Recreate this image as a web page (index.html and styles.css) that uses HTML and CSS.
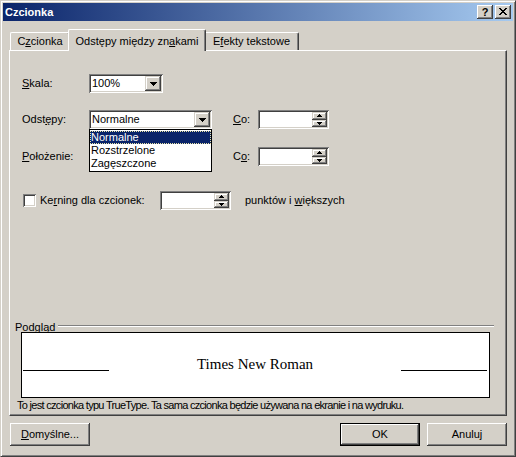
FILE: index.html
```html
<!DOCTYPE html>
<html lang="pl">
<head>
<meta charset="utf-8">
<title>Czcionka</title>
<link rel="stylesheet" href="styles.css">
</head>
<body>
<div class="window">
  <div class="titlebar">
    <span class="title">Czcionka</span>
    <div class="caption-btns">
      <span class="cbtn help">?</span>
      <span class="cbtn">
        <svg width="8" height="7" viewBox="0 0 8 7" shape-rendering="crispEdges"><path d="M0 0h2v1h-2z M6 0h2v1h-2z M1 1h2v1h-2z M5 1h2v1h-2z M2 2h4v1h-4z M3 3h2v1h-2z M2 4h4v1h-4z M1 5h2v1h-2z M5 5h2v1h-2z M0 6h2v1h-2z M6 6h2v1h-2z" fill="#000"/></svg>
      </span>
    </div>
  </div>

  <div class="tabs">
    <div class="tab tab1">C<u>z</u>cionka</div>
    <div class="tab active">Odstępy między zn<u>a</u>kami</div>
    <div class="tab tab3">E<u>f</u>ekty tekstowe</div>
  </div>

  <div class="panel">
    <div class="row row1">
      <span class="lbl"><u>S</u>kala:</span>
      <div class="combo combo-sm">
        <span class="ctext">100%</span>
        <span class="dbtn"><svg width="7" height="4" viewBox="0 0 7 4" shape-rendering="crispEdges"><path d="M0 0h7v1h-7z M1 1h5v1h-5z M2 2h3v1h-3z M3 3h1v1h-1z" fill="#000"/></svg></span>
      </div>
    </div>

    <div class="row row2">
      <span class="lbl">Odst<u>ę</u>py:</span>
      <div class="combo combo-lg">
        <span class="ctext">Normalne</span>
        <span class="dbtn"><svg width="7" height="4" viewBox="0 0 7 4" shape-rendering="crispEdges"><path d="M0 0h7v1h-7z M1 1h5v1h-5z M2 2h3v1h-3z M3 3h1v1h-1z" fill="#000"/></svg></span>
        <div class="dropdown">
          <div class="item selected">Normalne</div>
          <div class="item">Rozstrzelone</div>
          <div class="item">Zagęszczone</div>
        </div>
      </div>
      <span class="co"><u>C</u>o:</span>
      <div class="spin">
        <span class="stext"></span>
        <span class="sbtns">
          <span class="sbtn"><svg width="5" height="3" viewBox="0 0 5 3" shape-rendering="crispEdges"><path d="M2 0h1v1h-1z M1 1h3v1h-3z M0 2h5v1h-5z" fill="#000"/></svg></span>
          <span class="sbtn"><svg width="5" height="3" viewBox="0 0 5 3" shape-rendering="crispEdges"><path d="M0 0h5v1h-5z M1 1h3v1h-3z M2 2h1v1h-1z" fill="#000"/></svg></span>
        </span>
      </div>
    </div>

    <div class="row row3">
      <span class="lbl"><u>P</u>ołożenie:</span>
      <div class="combo combo-lg">
        <span class="ctext"></span>
        <span class="dbtn"></span>
      </div>
      <span class="co">C<u>o</u>:</span>
      <div class="spin">
        <span class="stext"></span>
        <span class="sbtns">
          <span class="sbtn"><svg width="5" height="3" viewBox="0 0 5 3" shape-rendering="crispEdges"><path d="M2 0h1v1h-1z M1 1h3v1h-3z M0 2h5v1h-5z" fill="#000"/></svg></span>
          <span class="sbtn"><svg width="5" height="3" viewBox="0 0 5 3" shape-rendering="crispEdges"><path d="M0 0h5v1h-5z M1 1h3v1h-3z M2 2h1v1h-1z" fill="#000"/></svg></span>
        </span>
      </div>
    </div>

    <div class="row row4">
      <span class="check"></span>
      <span class="klbl">Ke<u>r</u>ning dla czcionek:</span>
      <div class="spin">
        <span class="stext"></span>
        <span class="sbtns">
          <span class="sbtn"><svg width="5" height="3" viewBox="0 0 5 3" shape-rendering="crispEdges"><path d="M2 0h1v1h-1z M1 1h3v1h-3z M0 2h5v1h-5z" fill="#000"/></svg></span>
          <span class="sbtn"><svg width="5" height="3" viewBox="0 0 5 3" shape-rendering="crispEdges"><path d="M0 0h5v1h-5z M1 1h3v1h-3z M2 2h1v1h-1z" fill="#000"/></svg></span>
        </span>
      </div>
      <span class="after">punktów i <u>w</u>iększych</span>
    </div>

    <div class="group">
      <div class="group-head">
        <span class="glabel">Podgląd</span>
        <span class="gline"></span>
      </div>
      <div class="preview">
        <span class="pline"></span>
        <span class="ptext">Times New Roman</span>
        <span class="pline"></span>
      </div>
    </div>
    <div class="note">To jest czcionka typu TrueType. Ta sama czcionka będzie używana na ekranie i na wydruku.</div>
  </div>

  <div class="buttons">
    <span class="btn"><u>D</u>omyślne...</span>
    <span class="btn default">OK</span>
    <span class="btn cancel">Anuluj</span>
  </div>
</div>
</body>
</html>
```

FILE: styles.css
```css
* { box-sizing: border-box; }
html, body { margin: 0; padding: 0; }
body {
  width: 516px;
  height: 457px;
  overflow: hidden;
  background: #D4D0C8;
  font-family: "Liberation Sans", Arial, sans-serif;
  font-size: 11px;
  color: #000;
}
u { text-decoration: underline; text-underline-offset: 1px; }

.window {
  width: 516px;
  height: 457px;
  border: 1px solid;
  border-color: #D4D0C8 #404040 #404040 #D4D0C8;
  box-shadow: inset 1px 1px #fff, inset -1px -1px #808080;
  padding: 2px;
  display: flex;
  flex-direction: column;
}

/* title bar */
.titlebar {
  height: 18px;
  flex: none;
  display: flex;
  align-items: center;
  padding-left: 2px;
  background: linear-gradient(90deg, #0A246A 0%, #A6CAF0 100%);
}
.title {
  flex: 1;
  color: #fff;
  font-weight: bold;
  line-height: 18px;
}
.caption-btns {
  display: flex;
  gap: 2px;
  margin-right: 2px;
}
.cbtn {
  width: 16px;
  height: 14px;
  background: #D4D0C8;
  box-shadow: inset -1px -1px #404040, inset 1px 1px #fff, inset -2px -2px #808080;
  display: flex;
  align-items: center;
  justify-content: center;
  padding-bottom: 1px;
}
.cbtn.help {
  font-weight: bold;
  font-size: 11px;
  line-height: 12px;
}

/* tabs */
.tabs {
  height: 29px;
  flex: none;
  display: flex;
  align-items: flex-end;
  padding-left: 7px;
}
.tab {
  height: 18px;
  padding-top: 2px;
  line-height: 13px;
  text-align: center;
  white-space: nowrap;
  border-top: 1px solid #fff;
  border-left: 1px solid #fff;
  border-right: 1px solid #404040;
  border-radius: 2px 2px 0 0;
  box-shadow: inset -1px 0 #808080;
  background: #D4D0C8;
}
.tab1 { width: 60px; }
.tab3 { width: 95px; }
.tab.active {
  width: 138px;
  height: 22px;
  padding-top: 5px;
  margin: 0 -2px -1px -2px;
  position: relative;
  z-index: 1;
}

/* panel */
.panel {
  flex: none;
  height: 366px;
  margin: 0 6px;
  border-top: 1px solid #fff;
  border-left: 1px solid #fff;
  border-right: 1px solid #404040;
  border-bottom: 1px solid #404040;
  box-shadow: inset -1px -1px #808080;
  padding: 23px 0 3px 0;
  display: flex;
  flex-direction: column;
}
.row {
  display: flex;
  align-items: center;
  height: 19px;
  flex: none;
}
.row1, .row2, .row3 { padding-left: 12px; }
.row2 { margin-top: 17px; position: relative; z-index: 2; }
.row3 { margin-top: 18px; }
.row4 { margin-top: 25px; padding-left: 13px; }
.lbl { width: 67px; line-height: 13px; }

/* combo box */
.combo {
  position: relative;
  height: 19px;
  padding: 2px;
  background: #fff;
  box-shadow: inset 1px 1px #808080, inset -1px -1px #fff, inset 2px 2px #404040, inset -2px -2px #D4D0C8;
  display: flex;
}
.combo-sm { width: 74px; }
.combo-lg { width: 123px; }
.ctext {
  flex: 1;
  padding-left: 1px;
  line-height: 15px;
}
.dbtn {
  width: 16px;
  height: 15px;
  background: #D4D0C8;
  box-shadow: inset -1px -1px #404040, inset 1px 1px #D4D0C8, inset -2px -2px #808080, inset 2px 2px #fff;
  display: flex;
  align-items: center;
  justify-content: center;
}
.dropdown {
  position: absolute;
  top: 100%;
  left: 0;
  width: 123px;
  border: 1px solid #000;
  padding: 1px 0;
  background: #fff;
}
.item {
  height: 13px;
  line-height: 13px;
  padding-left: 1px;
  white-space: nowrap;
}
.item.selected {
  background: #0A246A;
  color: #fff;
  outline: 1px dotted #E8E4A8;
  outline-offset: -1px;
}

.co { width: 25px; margin-left: 21px; line-height: 13px; }

/* spin edit */
.spin {
  width: 71px;
  height: 19px;
  padding: 2px;
  background: #fff;
  box-shadow: inset 1px 1px #808080, inset -1px -1px #fff, inset 2px 2px #404040, inset -2px -2px #D4D0C8;
  display: flex;
}
.stext { flex: 1; }
.sbtns {
  width: 15px;
  display: flex;
  flex-direction: column;
}
.sbtn {
  flex: 1;
  background: #D4D0C8;
  box-shadow: inset -1px -1px #404040, inset 1px 1px #D4D0C8, inset -2px -2px #808080, inset 2px 2px #fff;
  display: flex;
  align-items: center;
  justify-content: center;
}

/* checkbox row */
.check {
  width: 13px;
  height: 13px;
  background: #fff;
  box-shadow: inset 1px 1px #808080, inset -1px -1px #fff, inset 2px 2px #404040, inset -2px -2px #D4D0C8;
}
.klbl { width: 120px; margin-left: 4px; line-height: 13px; white-space: nowrap; }
.after { margin-left: 14px; line-height: 13px; white-space: nowrap; }

/* preview group */
.group { margin-top: auto; }
.group-head {
  display: flex;
  align-items: flex-start;
  height: 13px;
  padding-left: 5px;
  position: relative;
  z-index: 1;
}
.glabel { line-height: 13px; }
.gline {
  flex: 1;
  height: 2px;
  margin: 4px 12px 0 3px;
  border-top: 1px solid #808080;
  border-bottom: 1px solid #fff;
}
.preview {
  margin: -2px 0 0 11px;
  width: 469px;
  height: 66px;
  border: 1px solid #000;
  background: #fff;
  display: flex;
  align-items: flex-start;
  padding: 0 2px 0 1px;
}
.pline {
  width: 86px;
  height: 1px;
  margin-top: 37px;
  background: #000;
}
.ptext {
  flex: 1;
  text-align: center;
  font-family: "Liberation Serif", "Times New Roman", serif;
  font-size: 15px;
  line-height: 17px;
  margin-top: 23px;
}
.note {
  margin-top: 1px;
  padding-left: 7px;
  line-height: 13px;
  white-space: nowrap;
  letter-spacing: -0.7px;
}

/* buttons */
.buttons {
  flex: none;
  display: flex;
  margin-top: 7px;
  padding: 0 6px 0 7px;
}
.btn {
  width: 80px;
  height: 23px;
  line-height: 22px;
  text-align: center;
  background: #D4D0C8;
  box-shadow: inset -1px -1px #404040, inset 1px 1px #fff, inset -2px -2px #808080;
}
.btn.default {
  margin-left: auto;
  border: 1px solid #000;
  line-height: 20px;
}
.btn.cancel { margin-left: 7px; }
```
